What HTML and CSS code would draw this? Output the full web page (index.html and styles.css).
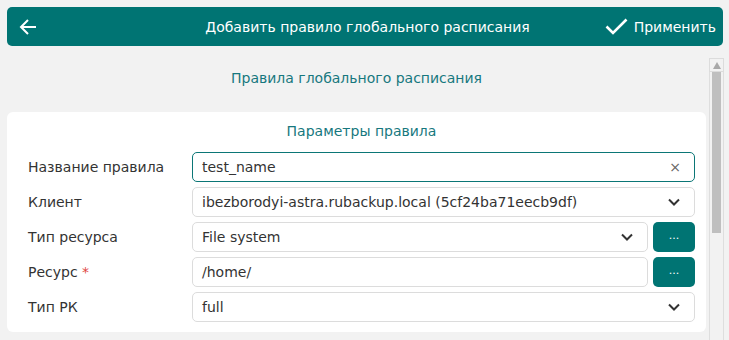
FILE: index.html
```html
<!DOCTYPE html>
<html lang="ru">
<head>
    <meta charset="UTF-8">
    <meta name="viewport" content="width=device-width, initial-scale=1.0">
    <title>Добавить правило глобального расписания</title>
    <link rel="stylesheet" href="styles.css">
</head>
<body>
    <header class="topbar">
        <button type="button" class="back" aria-label="Назад">
            <svg width="18" height="16" viewBox="0 0 18 16">
                <path d="M9 1 L2 8 L9 15 M2 8 H17" fill="none" stroke="#fff" stroke-width="2"/>
            </svg>
        </button>
        <h1 class="topbar-title">Добавить правило глобального расписания</h1>
        <button type="button" class="apply">
            <svg width="23" height="17" viewBox="0 0 23 17">
                <path d="M1.5 8.5 L8 15 L21.5 1.5" fill="none" stroke="#fff" stroke-width="2.6"/>
            </svg>
            Применить
        </button>
    </header>

    <div class="main">
        <section class="content">
            <h2 class="page-title">Правила глобального расписания</h2>

            <form class="card">
                <h3 class="card-title">Параметры правила</h3>

                <div class="row">
                    <label class="label">Название правила</label>
                    <div class="field focused">
                        <span class="value">test_name</span>
                        <span class="clear">&times;</span>
                    </div>
                </div>

                <div class="row">
                    <label class="label">Клиент</label>
                    <div class="field">
                        <span class="value">ibezborodyi-astra.rubackup.local (5cf24ba71eecb9df)</span>
                        <svg class="chevron" width="12" height="8" viewBox="0 0 12 8"><path d="M1 1.5 L6 6.5 L11 1.5" fill="none" stroke="#333" stroke-width="2"/></svg>
                    </div>
                </div>

                <div class="row">
                    <label class="label">Тип ресурса</label>
                    <div class="field">
                        <span class="value">File system</span>
                        <svg class="chevron" width="12" height="8" viewBox="0 0 12 8"><path d="M1 1.5 L6 6.5 L11 1.5" fill="none" stroke="#333" stroke-width="2"/></svg>
                    </div>
                    <button type="button" class="more">...</button>
                </div>

                <div class="row">
                    <label class="label">Ресурс <span class="req">*</span></label>
                    <div class="field">
                        <span class="value">/home/</span>
                    </div>
                    <button type="button" class="more">...</button>
                </div>

                <div class="row">
                    <label class="label">Тип РК</label>
                    <div class="field">
                        <span class="value">full</span>
                        <svg class="chevron" width="12" height="8" viewBox="0 0 12 8"><path d="M1 1.5 L6 6.5 L11 1.5" fill="none" stroke="#333" stroke-width="2"/></svg>
                    </div>
                </div>
            </form>
        </section>

        <div class="scrollbar">
            <div class="scroll-up"></div>
            <div class="scroll-track">
                <div class="scroll-thumb"></div>
            </div>
        </div>
    </div>
</body>
</html>
```

FILE: styles.css
```css
html,
body {
    height: 100%;
}

body {
    margin: 0;
    background-color: #f2f2f2;
    font-family: "DejaVu Sans", "Noto Sans", sans-serif;
    font-size: 14px;
    color: #333;
    overflow: hidden;
}

.topbar {
    display: grid;
    grid-template-columns: 1fr auto 1fr;
    align-items: center;
    height: 39px;
    margin: 7px 6px 0 7px;
    padding: 0 7px 0 12px;
    background-color: #007473;
    border-radius: 5px;
    color: #fff;
}

.back,
.apply {
    display: flex;
    align-items: center;
    padding: 0;
    border: none;
    background: none;
    color: inherit;
    font: inherit;
    font-size: 14px;
}

.apply {
    justify-self: end;
    gap: 6px;
}

.topbar-title {
    margin: 0;
    font-size: 14px;
    font-weight: normal;
    text-align: center;
}

.main {
    display: flex;
    height: calc(100% - 46px);
}

.content {
    width: 699px;
    margin-left: 7px;
}

.page-title {
    margin: 22px 0 24px;
    line-height: 20px;
    font-size: 14px;
    font-weight: normal;
    text-align: center;
    color: #17787e;
}

.card {
    padding: 9px 11px 10px 21px;
    background-color: #fff;
    border-radius: 6px;
}

.card-title {
    margin: 0 0 11px;
    line-height: 20px;
    font-size: 14px;
    font-weight: normal;
    text-align: center;
    color: #17787e;
}

.row {
    display: flex;
    align-items: center;
    gap: 5px;
    height: 30px;
    margin-bottom: 5px;
}

.row:last-child {
    margin-bottom: 0;
}

.label {
    width: 159px;
    flex-shrink: 0;
}

.req {
    color: #e0463f;
}

.field {
    flex: 1;
    display: flex;
    align-items: center;
    height: 100%;
    box-sizing: border-box;
    padding: 0 14px 0 9px;
    border: 1px solid #dcdcdc;
    border-radius: 5px;
}

.field.focused {
    border-color: #0b7676;
}

.value {
    flex: 1;
}

.clear {
    color: #666;
    font-size: 14px;
    margin-right: -1px;
}

.more {
    width: 42px;
    height: 100%;
    padding: 0 0 4px;
    border: none;
    border-radius: 5px;
    background-color: #007473;
    color: #fff;
    font: inherit;
    font-size: 11px;
}

.scrollbar {
    display: flex;
    flex-direction: column;
    width: 15px;
    margin: 12px 0 0 3px;
    box-sizing: border-box;
    border-left: 1px solid #dedede;
    border-right: 1px solid #dedede;
}

.scroll-up {
    display: flex;
    justify-content: center;
    align-items: center;
    height: 14px;
    box-sizing: border-box;
    border: 1px solid #dcdcdc;
    margin: 0 -1px;
}

.scroll-up::before {
    content: "";
    border-left: 4px solid transparent;
    border-right: 4px solid transparent;
    border-bottom: 7px solid #a8a8a8;
}

.scroll-track {
    flex: 1;
    padding: 0 2px;
}

.scroll-thumb {
    height: 161px;
    background-color: #bfbfbf;
}
```
